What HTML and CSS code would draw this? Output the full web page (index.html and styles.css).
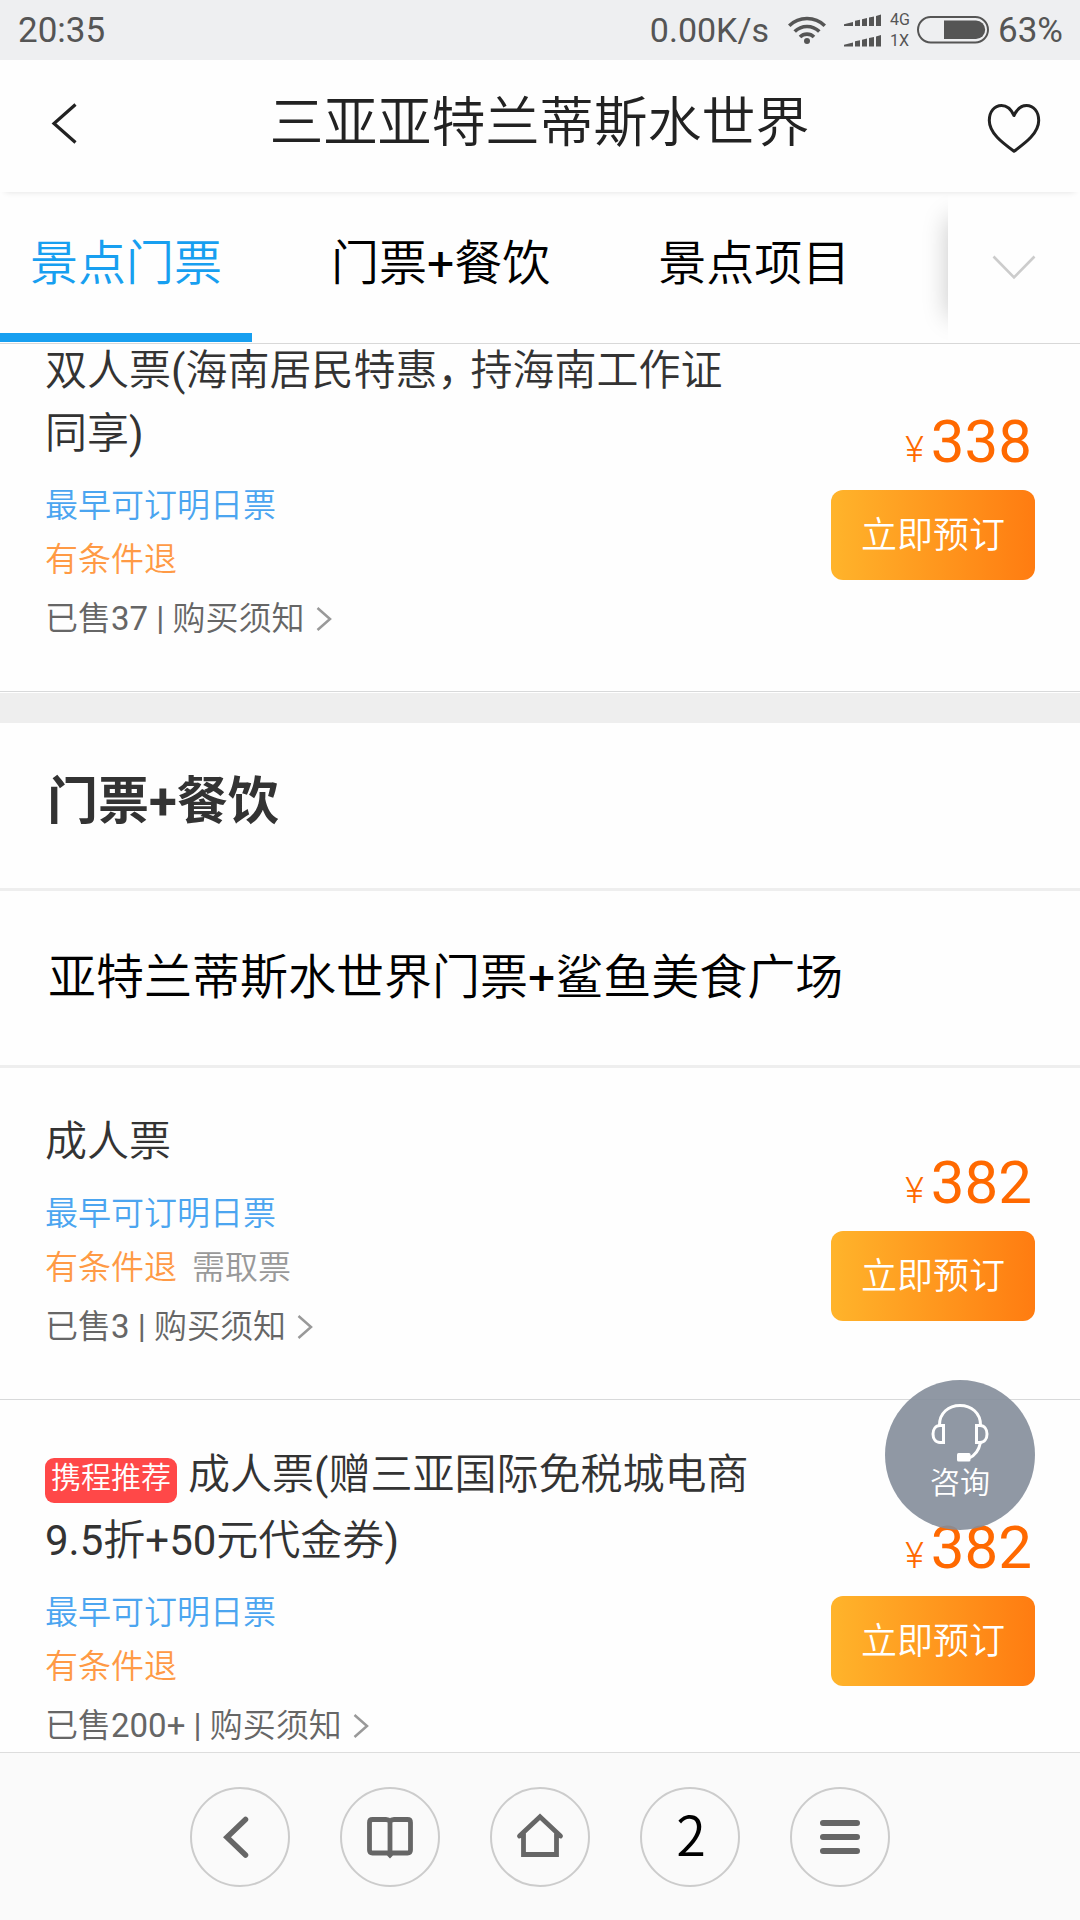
FILE: index.html
```html
<!DOCTYPE html>
<html lang="zh-CN">
<head>
<meta charset="utf-8">
<title>三亚亚特兰蒂斯水世界</title>
<link rel="stylesheet" href="styles.css">
</head>
<body>
<div class="screen">
  <div class="status">
    <span class="status-time">20:35</span>
    <span class="status-speed">0.00K/s</span>
    <svg class="status-wifi" width="38" height="28" viewBox="0 0 38 28" fill="none" stroke="#555" stroke-width="3.6">
      <path d="M1.2 9.8a25.5 25.5 0 0 1 35.6 0M6.7 15.5a17.5 17.5 0 0 1 24.6 0M12 21a10 10 0 0 1 14 0"/>
      <circle cx="19" cy="25" r="3" fill="#555" stroke="none"/>
    </svg>
    <svg class="status-signal" width="38" height="33" viewBox="0 0 38 33" fill="#555">
      <path id="bars" d="M0 12V10.300l9-2.300v4zM11 12V6.800l5-1.100V12zM18 12V5.200l5-1.100V12zM25 12V3.600l5-1.100V12zM32 12V2l5-1.400V12z"/>
      <use href="#bars" y="20.500"/>
    </svg>
    <span class="status-net"><span>4G</span><span>1X</span></span>
    <svg class="status-battery" width="72" height="28" viewBox="0 0 72 28">
      <rect x="1" y="1" width="70" height="25.500" rx="12.700" fill="none" stroke="#555" stroke-width="2"/>
      <path d="M27 4.500h32a9.200 9.200 0 0 1 0 18.400h-32z" fill="#555"/>
    </svg>
    <span class="status-level">63%</span>
  </div>

  <header class="header">
    <svg class="header-back" width="26" height="42" viewBox="0 0 26 42" fill="none" stroke="#222" stroke-width="3.200"><path d="M24.500 2.500 3 21.500 24.500 40.500"/></svg>
    <h1 class="header-title">三亚亚特兰蒂斯水世界</h1>
    <svg class="header-heart" width="54" height="50" viewBox="0 0 54 50" fill="none" stroke="#222" stroke-width="3" stroke-linejoin="round"><path d="M27 12.500C24 6 19.500 2.500 14.500 2.500 7.500 2.500 2.300 8.500 2.300 17.500 2.300 30 15 39.500 27 48.300 39 39.500 51.700 30 51.700 17.500 51.700 8.500 46.500 2.500 39.500 2.500 34.500 2.500 30 6 27 12.500z"/></svg>
  </header>

  <nav class="tabs">
    <a class="tab tab--active">景点门票</a>
    <a class="tab">门票<span class="latin">+</span>餐饮</a>
    <a class="tab">景点项目</a>
    <div class="tabs-more">
      <svg width="44" height="26" viewBox="0 0 44 26" fill="none" stroke="#ccc" stroke-width="2.600"><path d="M1.500 1.500 22 22.500 42.500 1.500"/></svg>
    </div>
  </nav>

  <main class="list">
    <section class="item item--first">
      <div class="item-info">
        <h3 class="item-title">双人票<span class="latin">(</span>海南居民特惠<span class="comma">，</span>持海南工作证同享<span class="latin">)</span></h3>
        <p class="item-date">最早可订明日票</p>
        <p class="item-refund">有条件退</p>
        <p class="item-sold">已售<span class="latin">37 | </span>购买须知<svg class="item-arrow" width="16" height="24" viewBox="0 0 16 24"><path d="M1.500 1 14 12 1.500 23"/></svg></p>
      </div>
      <div class="buy">
        <div class="price"><span class="price-unit">¥</span>338</div>
        <button class="buy-btn">立即预订</button>
      </div>
    </section>
    <div class="gap"></div>
    <h2 class="group-title">门票+餐饮</h2>
    <h2 class="group-name">亚特兰蒂斯水世界门票<span class="latin">+</span>鲨鱼美食广场</h2>
    <section class="item">
      <div class="item-info">
        <h3 class="item-title">成人票</h3>
        <p class="item-date">最早可订明日票</p>
        <p class="item-refund">有条件退<span class="item-pickup">需取票</span></p>
        <p class="item-sold">已售<span class="latin">3 | </span>购买须知<svg class="item-arrow" width="16" height="24" viewBox="0 0 16 24"><path d="M1.500 1 14 12 1.500 23"/></svg></p>
      </div>
      <div class="buy">
        <div class="price"><span class="price-unit">¥</span>382</div>
        <button class="buy-btn">立即预订</button>
      </div>
    </section>
    <section class="item item--tagged">
      <div class="item-info">
        <h3 class="item-title"><span class="tag">携程推荐</span>成人票<span class="latin">(</span>赠三亚国际免税城电商<span class="latin">9.5</span>折<span class="latin">+50</span>元代金券<span class="latin">)</span></h3>
        <p class="item-date">最早可订明日票</p>
        <p class="item-refund">有条件退</p>
        <p class="item-sold">已售<span class="latin">200+ | </span>购买须知<svg class="item-arrow" width="16" height="24" viewBox="0 0 16 24"><path d="M1.500 1 14 12 1.500 23"/></svg></p>
      </div>
      <div class="buy">
        <div class="price"><span class="price-unit">¥</span>382</div>
        <button class="buy-btn">立即预订</button>
      </div>
    </section>
  </main>

  <div class="consult">
    <svg width="58" height="60" viewBox="0 0 58 60" fill="none" stroke="#fff" stroke-width="3">
      <path d="M8.500 22C8.500 10 17.500 2.500 29 2.500S49.500 10 49.500 22"/>
      <path d="M12.500 22.500v17h-3.500c-4.500 0-7-4-7-8.500s2.500-8.500 7-8.500zM45.500 22.500v17h3.500c4.500 0 7-4 7-8.500s-2.500-8.500-7-8.500z"/>
      <path d="M49.500 39.500c-1.500 7-5 13-11.500 15.500"/>
      <rect x="26" y="50" width="13.500" height="8.500" rx="1.500" fill="#fff" stroke="none"/>
    </svg>
    <span>咨询</span>
  </div>

  <footer class="toolbar">
    <a class="tool"><svg width="60" height="60" viewBox="0 0 60 60"><path d="M35.500 12.500 17 30.200 35.500 48" stroke-width="5.500" stroke-linecap="round"/></svg></a>
    <a class="tool"><svg width="60" height="60" viewBox="0 0 60 60"><path d="M30 14.500Q28.500 12.500 26 12.500H12.500Q9.500 12.500 9.500 15.500V43Q9.500 46 12.500 46H28L30 48 32 46H47.500Q50.500 46 50.500 43V15.500Q50.500 12.500 47.500 12.500H34Q31.500 12.500 30 14.500V46" stroke-width="4.800"/></svg></a>
    <a class="tool"><svg width="60" height="60" viewBox="0 0 60 60"><path d="M9.500 29 30 9.800 50.500 29M13.500 26V47.500H46.500V26" stroke-width="4.800" stroke-linecap="round"/></svg></a>
    <a class="tool tool--count">2</a>
    <a class="tool"><svg width="60" height="60" viewBox="0 0 60 60"><path d="M13 16H47M13 30H47M13 44H47" stroke-width="6" stroke-linecap="round"/></svg></a>
  </footer>
</div>
</body>
</html>
```
FILE: styles.css
```css
* {
  box-sizing: border-box;
  margin: 0;
  padding: 0;
}

body {
  font-family: Roboto, "Noto Sans CJK SC", sans-serif;
  font-weight: 350;
  background: #fff;
}

h1, h2, h3 {
  font-weight: 350;
}

svg {
  display: block;
  flex: none;
}

/* digits and punctuation keep the regular weight */
.latin {
  font-weight: 400;
}

.screen {
  position: relative;
  display: flex;
  flex-direction: column;
  width: 1080px;
  height: 1920px;
  overflow: hidden;
  background: #fefefe;
}

/* status bar */
.status {
  display: flex;
  align-items: center;
  flex: none;
  height: 60px;
  padding: 0 17px 0 18px;
  background: #eeeff1;
  color: #555;
  font-size: 35px;
  font-weight: 400;
}

.status-speed {
  margin-left: auto;
  font-size: 34px;
}

.status-wifi {
  margin-left: 19px;
}

.status-signal {
  margin-left: 18px;
}

.status-net {
  display: flex;
  flex-direction: column;
  margin: 0 5px 0 8px;
  width: 22px;
  font-size: 16px;
  line-height: 21px;
}

.status-level {
  margin-left: 9px;
  font-size: 35px;
}

/* page header */
.header {
  display: flex;
  align-items: center;
  justify-content: space-between;
  flex: none;
  height: 132px;
  padding: 0 39px 0 51px;
  box-shadow: 0 5px 6px -5px rgba(0, 0, 0, 0.12);
}

.header-back {
  margin-right: 15px;
  margin-bottom: 6px;
}

.header-title {
  margin-bottom: 15px;
  color: #222;
  font-size: 54px;
}

.header-heart {
  margin-top: 4px;
}

/* category tabs */
.tabs {
  display: flex;
  flex: none;
  height: 152px;
  border-bottom: 1px solid #d8d8d8;
}

.tab {
  padding: 0 54px;
  color: #000;
  font-size: 48px;
  line-height: 144px;
  white-space: nowrap;
}

.tab--active {
  height: 150px;
  padding: 0 30px;
  margin-right: 25px;
  border-bottom: 9px solid #179ff0;
  color: #179ff0;
}

.tabs-more {
  position: relative;
  display: flex;
  align-items: center;
  justify-content: center;
  width: 132px;
  margin-left: auto;
}

.tabs-more svg {
  margin-top: 1px;
}

.tabs-more::before {
  content: "";
  position: absolute;
  left: 0;
  top: 26px;
  bottom: 26px;
  width: 30px;
  box-shadow: 0 0 26px rgba(0, 0, 0, 0.22);
  clip-path: inset(-30px 30px -30px -30px);
}

/* ticket list */
.list {
  flex: 1;
  min-height: 0;
  overflow: hidden;
}

.item {
  display: flex;
  align-items: center;
  justify-content: space-between;
  padding: 42px 45px 45px;
  border-bottom: 1px solid #d8d9da;
}

.item--first {
  padding-top: 0;
  margin-top: -5px;
}

.item-info {
  width: 710px;
  font-size: 33px;
  line-height: 54px;
}

.item-title {
  margin-bottom: 14px;
  color: #333;
  font-size: 42px;
  line-height: 63px;
}

.item--tagged .item-title {
  margin-bottom: 12px;
  line-height: 66px;
}

.comma {
  letter-spacing: -9px;
}

.item-date {
  color: #4ba5f0;
}

.item-refund {
  margin-bottom: 5px;
  color: #ff9a45;
}

.item-pickup {
  margin-left: 15px;
  color: #999;
}

.item-sold {
  height: 54px;
  color: #666;
}

.item-arrow {
  display: inline-block;
  margin-left: 11px;
  vertical-align: -1px;
  fill: none;
  stroke: #999;
  stroke-width: 2.500;
}

.tag {
  display: inline-block;
  height: 45px;
  margin-right: 11px;
  padding: 0 6px;
  border-radius: 9px;
  background: #ff4848;
  color: #fff;
  font-size: 30px;
  line-height: 39px;
  vertical-align: 1px;
}

.buy {
  display: flex;
  flex-direction: column;
  gap: 4px;
  margin-top: 3px;
}

.item--first .buy {
  margin-top: 0;
}

.price {
  padding-right: 3px;
  color: #ff6900;
  font-size: 60px;
  font-weight: 400;
  line-height: 72px;
  text-align: right;
}

.price-unit {
  margin-right: 7px;
  font-size: 36px;
  font-weight: 350;
}

.buy-btn {
  width: 204px;
  height: 90px;
  padding-bottom: 6px;
  border: 0;
  border-radius: 12px;
  background: linear-gradient(90deg, #ffb42b, #ff7c11);
  color: #fff;
  font: inherit;
  font-size: 36px;
}

.gap {
  height: 31px;
  border-top: 1px solid #fff;
  background: #eee;
}

.group-title,
.group-name {
  padding-left: 47px;
  border-bottom: 3px solid #eee;
}

.group-title {
  height: 168px;
  color: #333;
  font-size: 51px;
  font-weight: 700;
  line-height: 158px;
}

.group-name {
  height: 177px;
  padding-left: 48px;
  color: #000;
  font-size: 48px;
  line-height: 173px;
}

/* floating help button */
.consult {
  position: absolute;
  left: 885px;
  top: 1380px;
  display: flex;
  flex-direction: column;
  align-items: center;
  width: 150px;
  height: 150px;
  padding-top: 23px;
  border-radius: 50%;
  background: rgba(132, 141, 154, 0.9);
  color: #fff;
  font-size: 30px;
  line-height: 40px;
}

/* browser toolbar */
.toolbar {
  display: flex;
  align-items: center;
  justify-content: center;
  gap: 50px;
  flex: none;
  height: 168px;
  border-top: 1px solid #ddd;
  background: #fafafa;
}

.tool {
  display: flex;
  align-items: center;
  justify-content: center;
  width: 100px;
  height: 100px;
  border: 2px solid #ccc;
  border-radius: 50%;
}

.tool svg {
  fill: none;
  stroke: #666;
}

.tool--count {
  padding: 0 0 8px 2px;
  color: #000;
  font-family: "Noto Sans CJK SC", sans-serif;
  font-size: 54px;
}
```
